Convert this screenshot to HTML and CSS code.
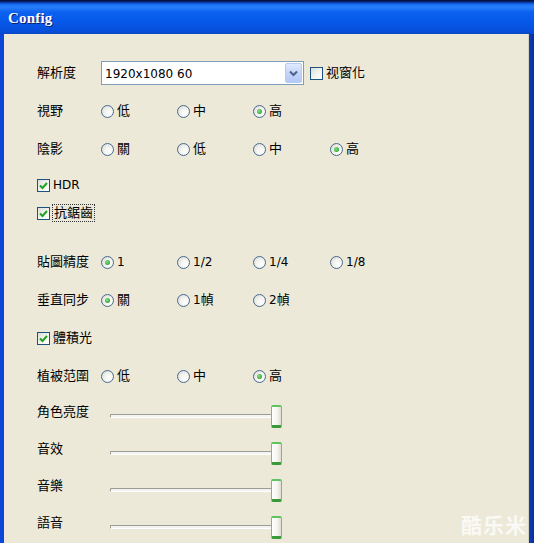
FILE: index.html
```html
<!DOCTYPE html>
<html>
<head>
<meta charset="utf-8">
<link rel="stylesheet" href="styles.css">
</head>
<body>
<div class="window">
  <div class="titlebar"><span class="title">Config</span></div>
  <div class="client">
    <div class="row r-combo">
      <span class="lbl">解析度</span>
      <div class="combo">
        <span class="combo-text lat">1920x1080 60</span>
        <span class="combo-btn"><svg width="9" height="7" viewBox="0 0 9 7"><path d="M1 1.5 L4.5 5 L8 1.5" fill="none" stroke="#4d6185" stroke-width="2"/></svg></span>
      </div>
      <span class="check"><span class="box"></span><span class="ctext">视窗化</span></span>
    </div>
    <div class="row">
      <span class="lbl">視野</span>
      <span class="radio"><span class="dot"></span><span>低</span></span>
      <span class="radio"><span class="dot"></span><span>中</span></span>
      <span class="radio"><span class="dot on"></span><span>高</span></span>
    </div>
    <div class="row">
      <span class="lbl">陰影</span>
      <span class="radio"><span class="dot"></span><span>關</span></span>
      <span class="radio"><span class="dot"></span><span>低</span></span>
      <span class="radio"><span class="dot"></span><span>中</span></span>
      <span class="radio"><span class="dot on"></span><span>高</span></span>
    </div>
    <div class="crow c-hdr">
      <span class="check"><span class="box on"><svg width="9" height="9" viewBox="0 0 9 9"><path d="M1 4.5 L3.5 7 L8 2" fill="none" stroke="#21a121" stroke-width="2"/></svg></span><span class="ctext lat">HDR</span></span>
    </div>
    <div class="crow c-aa">
      <span class="check"><span class="box on"><svg width="9" height="9" viewBox="0 0 9 9"><path d="M1 4.5 L3.5 7 L8 2" fill="none" stroke="#21a121" stroke-width="2"/></svg></span><span class="ctext focus">抗鋸齒</span></span>
    </div>
    <div class="row r-gap">
      <span class="lbl">貼圖精度</span>
      <span class="radio"><span class="dot on"></span><span class="lat">1</span></span>
      <span class="radio"><span class="dot"></span><span class="lat">1/2</span></span>
      <span class="radio"><span class="dot"></span><span class="lat">1/4</span></span>
      <span class="radio"><span class="dot"></span><span class="lat">1/8</span></span>
    </div>
    <div class="row">
      <span class="lbl">垂直同步</span>
      <span class="radio"><span class="dot on"></span><span>關</span></span>
      <span class="radio"><span class="dot"></span><span><span class="lat">1</span>幀</span></span>
      <span class="radio"><span class="dot"></span><span><span class="lat">2</span>幀</span></span>
    </div>
    <div class="crow">
      <span class="check"><span class="box on"><svg width="9" height="9" viewBox="0 0 9 9"><path d="M1 4.5 L3.5 7 L8 2" fill="none" stroke="#21a121" stroke-width="2"/></svg></span><span class="ctext">體積光</span></span>
    </div>
    <div class="row">
      <span class="lbl">植被范圍</span>
      <span class="radio"><span class="dot"></span><span>低</span></span>
      <span class="radio"><span class="dot"></span><span>中</span></span>
      <span class="radio"><span class="dot on"></span><span>高</span></span>
    </div>
    <div class="srow">
      <span class="lbl">角色亮度</span>
      <div class="slider"><span class="track"></span><span class="thumb"></span></div>
    </div>
    <div class="srow">
      <span class="lbl">音效</span>
      <div class="slider"><span class="track"></span><span class="thumb"></span></div>
    </div>
    <div class="srow">
      <span class="lbl">音樂</span>
      <div class="slider"><span class="track"></span><span class="thumb"></span></div>
    </div>
    <div class="srow">
      <span class="lbl">語音</span>
      <div class="slider"><span class="track"></span><span class="thumb"></span></div>
    </div>
    <div class="watermark">酷乐米</div>
  </div>
</div>
</body>
</html>
```

FILE: styles.css
```css
html, body {
  margin: 0;
  padding: 0;
  background: #0a3fc0;
}
body {
  font-family: "DejaVu Sans", "Noto Sans CJK TC", sans-serif;
  font-size: 13px;
  line-height: 16px;
  color: #000;
}
.window {
  width: 534px;
  height: 543px;
  display: flex;
  flex-direction: column;
  background: linear-gradient(to right, #0a46d8 0, #0a46d8 520px, #0d3fb8 529px, #0b2f9a 534px);
  overflow: hidden;
}
.titlebar {
  height: 34px;
  flex: none;
  display: flex;
  align-items: center;
  padding-left: 8px;
  background: linear-gradient(to bottom, #030a28 0, #0a2a8a 2px, #1468f0 4px, #2a80fa 7px, #0c62f0 12px, #0658e8 22px, #0650dd 30px, #0a48c8 34px);
}
.title {
  font-family: "Liberation Serif", serif;
  font-weight: bold;
  font-size: 15px;
  color: #fff;
  text-shadow: 1px 1px 0 #0a1e70;
  padding-top: 2px;
  letter-spacing: 0.2px;
}
.client {
  position: relative;
  flex: 1;
  margin: 0 5px 0 4px;
  background: #ece9d8;
  box-shadow: inset -1px 0 0 #d6d2c0;
  padding: 20px 0 0 33px;
  display: flex;
  flex-direction: column;
}
.lat {
  font-size: 12px;
}
.row {
  height: 38px;
  display: grid;
  grid-template-columns: 64px 76px 76px 77px auto;
  align-items: center;
}
.r-combo {
  grid-template-columns: 64px 209px auto;
}
.r-gap {
  margin-top: 19px;
}
.lbl {
  font-size: 13px;
  white-space: nowrap;
}
.combo {
  width: 201px;
  height: 22px;
  border: 1px solid #7f9db9;
  background: #fff;
  display: flex;
  align-items: center;
  justify-content: space-between;
}
.combo-text {
  padding-left: 3px;
  padding-top: 1px;
}
.combo-btn {
  width: 15px;
  height: 18px;
  margin-right: 1px;
  border: 1px solid #b9c9ef;
  border-radius: 2px;
  background: linear-gradient(to bottom, #e1eafe 0%, #c4d4fb 50%, #b4c8f6 100%);
  display: flex;
  align-items: center;
  justify-content: center;
}
.check {
  display: flex;
  align-items: center;
  gap: 3px;
}
.box {
  width: 11px;
  height: 11px;
  border: 1px solid #1c5180;
  background: linear-gradient(135deg, #dcdcd7 0%, #f5f5f2 60%, #ffffff 100%);
  display: flex;
  align-items: center;
  justify-content: center;
  flex: none;
}
.crow {
  height: 38px;
  display: flex;
  align-items: center;
}
.c-hdr {
  height: 34px;
}
.c-aa {
  height: 22px;
}
.focus {
  outline: 1px dotted #333;
  outline-offset: 0;
  padding: 0 1px;
}
.radio {
  display: flex;
  align-items: center;
  gap: 3px;
  white-space: nowrap;
}
.dot {
  width: 11px;
  height: 11px;
  border-radius: 50%;
  border: 1px solid #4a6a8e;
  background: radial-gradient(circle at 65% 65%, #ffffff 0%, #f2f2ee 45%, #d4d4cf 100%);
  display: flex;
  align-items: center;
  justify-content: center;
  flex: none;
}
.dot.on::after {
  content: "";
  width: 5px;
  height: 5px;
  border-radius: 50%;
  background: radial-gradient(circle at 40% 40%, #8be28b 0%, #3fb03f 60%, #21a121 100%);
}
.srow {
  height: 37px;
  display: grid;
  grid-template-columns: 64px auto;
  align-items: start;
}
.srow .lbl {
  padding-top: 9px;
}
.slider {
  position: relative;
  margin: 10px 0 0 9px;
  width: 174px;
  height: 22px;
}
.track {
  position: absolute;
  left: 0;
  top: 9px;
  width: 166px;
  height: 2px;
  border-top: 1px solid #9d9c99;
  border-left: 1px solid #9d9c99;
  border-bottom: 1px solid #ffffff;
  border-radius: 1px;
  background: #f3f3ef;
}
.thumb {
  position: absolute;
  left: 161px;
  top: 0;
  width: 9px;
  height: 18px;
  border: 1px solid #8fae8f;
  border-top: 2px solid #5fc35f;
  border-bottom: 3px solid #3a9a3a;
  border-radius: 2px;
  background: linear-gradient(to right, #ffffff 0%, #f4f4f0 60%, #dedbd0 100%);
}
.watermark {
  position: absolute;
  right: 2px;
  bottom: 7px;
  font-family: "Noto Sans CJK SC", sans-serif;
  font-weight: bold;
  font-size: 21px;
  line-height: 24px;
  color: rgba(255, 255, 255, 0.75);
  letter-spacing: 1px;
}
```
